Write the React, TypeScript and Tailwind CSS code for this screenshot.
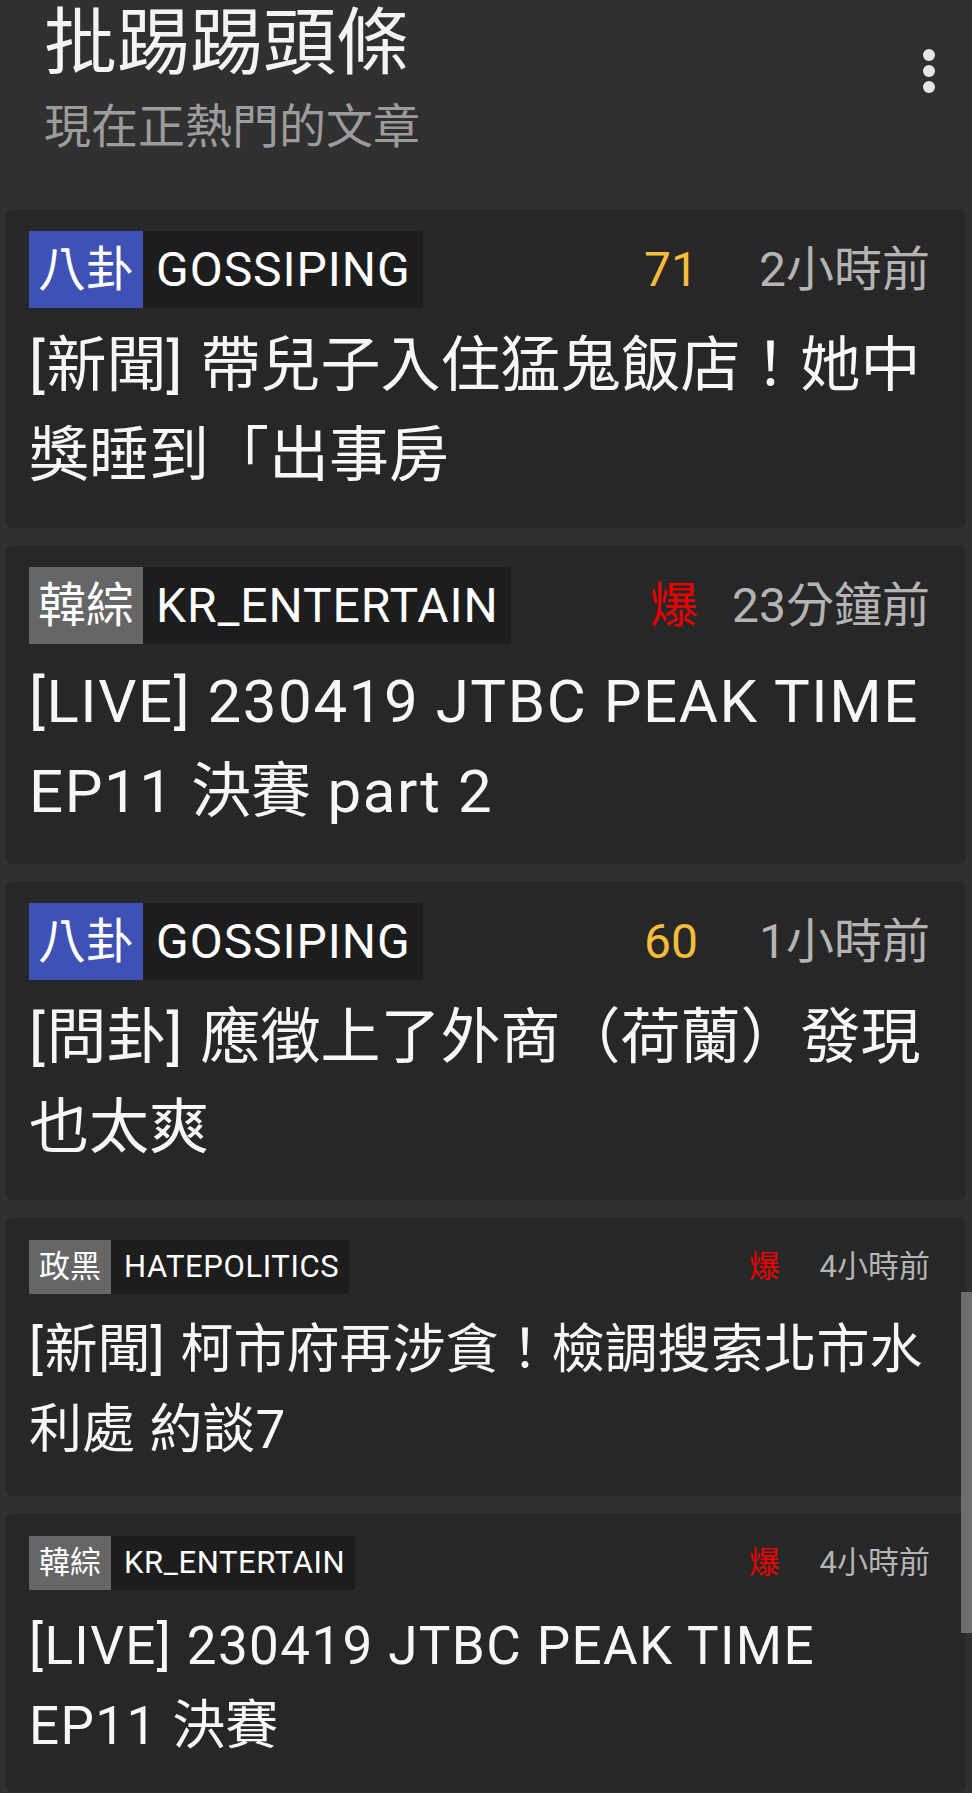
type Post = {
  cat: string;
  board: string;
  catBg: string;
  count: string;
  time: string;
  title: string;
  compact?: boolean;
};

const POSTS: Post[] = [
  {
    cat: '八卦',
    board: 'GOSSIPING',
    catBg: 'bg-[#3f51b5]',
    count: '71',
    time: '2小時前',
    title: '[新聞] 帶兒子入住猛鬼飯店！她中獎睡到「出事房',
  },
  {
    cat: '韓綜',
    board: 'KR_ENTERTAIN',
    catBg: 'bg-[#666666]',
    count: '爆',
    time: '23分鐘前',
    title: '[LIVE] 230419 JTBC PEAK TIME EP11 決賽 part 2',
  },
  {
    cat: '八卦',
    board: 'GOSSIPING',
    catBg: 'bg-[#3f51b5]',
    count: '60',
    time: '1小時前',
    title: '[問卦] 應徵上了外商（荷蘭）發現也太爽',
  },
  {
    cat: '政黑',
    board: 'HATEPOLITICS',
    catBg: 'bg-[#666666]',
    count: '爆',
    time: '4小時前',
    title: '[新聞] 柯市府再涉貪！檢調搜索北市水利處 約談7',
    compact: true,
  },
  {
    cat: '韓綜',
    board: 'KR_ENTERTAIN',
    catBg: 'bg-[#666666]',
    count: '爆',
    time: '4小時前',
    title: '[LIVE] 230419 JTBC PEAK TIME EP11 決賽',
    compact: true,
  },
];

// latin runs sit a touch wider than the CJK around them
function Title({ text }: { text: string }) {
  return (
    <>
      {text.split(/([\x00-\x7F]+)/).map((part, i) =>
        i % 2 === 1 ? (
          <span key={i} className="tracking-[0.026em]">
            {part}
          </span>
        ) : (
          part
        )
      )}
    </>
  );
}

function PostCard({ post }: { post: Post }) {
  const hot = post.count === '爆';
  const c = post.compact;

  return (
    <div
      className={`rounded-md bg-[#272727] shadow-[0_1px_3px_rgba(0,0,0,0.35)] pl-[22px] pr-[35px] ${
        c ? 'pt-[22px] pb-[24px]' : 'pt-[21px] pb-[25px]'
      }`}
    >
      {/* META ROW */}
      <div
        className={`flex items-center justify-between ${
          c ? 'h-[54px] text-[31px]' : 'h-[77px] text-[48px]'
        }`}
      >
        <div className="flex h-full items-stretch">
          <span className={`flex items-center text-white ${post.catBg} ${c ? 'px-[10px]' : 'px-[9px]'}`}>
            {post.cat}
          </span>
          <span
            className={`flex items-center bg-[#1d1d1d] tracking-[0.02em] text-white ${
              c ? 'pl-[13px] pr-[10px]' : 'pl-[13px] pr-[12px]'
            }`}
          >
            {post.board}
          </span>
        </div>
        <div className="flex items-center">
          <span className={`text-right ${hot ? 'text-[#e80000]' : 'text-[#f7bc3a]'}`}>{post.count}</span>
          <span className={`text-right text-[#b4b4b4] ${c ? 'w-[150px]' : 'w-[232px]'}`}>{post.time}</span>
        </div>
      </div>

      {/* TITLE */}
      <p
        className={`text-[#f7f7f7] ${
          c ? 'mt-[16px] text-[53px] leading-[80px]' : 'mt-[13px] text-[60px] leading-[90px]'
        }`}
      >
        <Title text={post.title} />
      </p>
    </div>
  );
}

export default function App() {
  return (
    <main className="relative min-h-screen bg-[#303030] font-[Roboto,'Noto_Sans_CJK_TC',sans-serif]">
      {/* HEADER */}
      <header className="flex h-[210px] items-start justify-between pl-[44px] pr-[31px] pt-[3px]">
        <div>
          <h1 className="text-[73px] leading-[80px] text-[#f4f4f4]">批踢踢頭條</h1>
          <p className="mt-[16px] text-[47px] leading-[56px] text-[#9c9c9c]">現在正熱門的文章</p>
        </div>
        <button className="mt-[42px]">
          <svg width="24" height="52" viewBox="0 0 24 52" className="fill-[#e6e6e6]">
            <circle cx="12" cy="10" r="6" />
            <circle cx="12" cy="26" r="6" />
            <circle cx="12" cy="42" r="6" />
          </svg>
        </button>
      </header>

      {/* POST LIST */}
      <div className="flex flex-col gap-[20px] px-[7px]">
        {POSTS.map((p, i) => (
          <PostCard key={i} post={p} />
        ))}
      </div>

      {/* SCROLLBAR */}
      <div className="absolute right-0 top-[1292px] h-[341px] w-[11px] bg-[#6e6e6e]" />
    </main>
  );
}
